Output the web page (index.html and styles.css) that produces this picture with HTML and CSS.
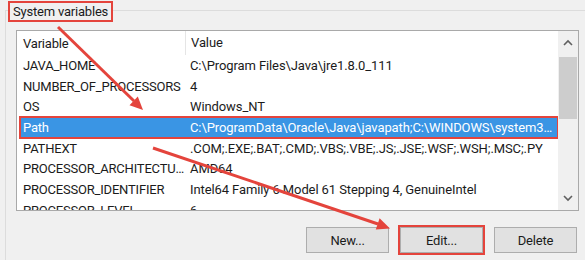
FILE: index.html
```html
<!DOCTYPE html>
<html lang="en">
<head>
<meta charset="UTF-8">
<title>System variables</title>
<link rel="stylesheet" href="styles.css">
</head>
<body>
  <div class="group">
    <div class="caption">System variables</div>

    <div class="list">
      <div class="rows">
        <div class="row head">
          <div class="cell name">Variable</div>
          <div class="cell value">Value</div>
        </div>
        <div class="row"><div class="cell name">JAVA_HOME</div><div class="cell value">C:\Program Files\Java\jre1.8.0_111</div></div>
        <div class="row"><div class="cell name">NUMBER_OF_PROCESSORS</div><div class="cell value">4</div></div>
        <div class="row"><div class="cell name">OS</div><div class="cell value">Windows_NT</div></div>
        <div class="row selected"><div class="cell name">Path</div><div class="cell value">C:\ProgramData\Oracle\Java\javapath;C:\WINDOWS\system32;C:\WINDOWS</div></div>
        <div class="row"><div class="cell name">PATHEXT</div><div class="cell value">.COM;.EXE;.BAT;.CMD;.VBS;.VBE;.JS;.JSE;.WSF;.WSH;.MSC;.PY</div></div>
        <div class="row"><div class="cell name">PROCESSOR_ARCHITECTURE</div><div class="cell value">AMD64</div></div>
        <div class="row"><div class="cell name">PROCESSOR_IDENTIFIER</div><div class="cell value">Intel64 Family 6 Model 61 Stepping 4, GenuineIntel</div></div>
        <div class="row"><div class="cell name">PROCESSOR_LEVEL</div><div class="cell value">6</div></div>
      </div>

      <div class="scrollbar">
        <svg class="chev" viewBox="0 0 20 16"><polyline points="6,10 10,6 14,10"/></svg>
        <div class="thumb"></div>
        <div class="track"></div>
        <svg class="chev" viewBox="0 0 20 16"><polyline points="6,6 10,10 14,6"/></svg>
      </div>
    </div>

    <div class="buttons">
      <button class="btn">New...</button>
      <button class="btn marked">Edit...</button>
      <button class="btn">Delete</button>
    </div>
  </div>

  <!-- red annotation arrows -->
  <svg class="arrows" viewBox="0 0 585 260">
    <line x1="58" y1="27" x2="134" y2="101"/>
    <polygon points="143,110 129.5,105.3 137.8,96.6"/>
    <line x1="153" y1="148" x2="378" y2="224"/>
    <polygon points="390,228.5 375.8,229.5 379.6,218.2"/>
  </svg>
</body>
</html>
```

FILE: styles.css
```css
body{margin:0;width:585px;height:260px;overflow:hidden;background:#f0f0f0;
     font-family:Roboto,"Noto Sans",sans-serif;font-size:13px;letter-spacing:-.2px;
     color:#1b1b1b;position:relative}

/* ─────────── GROUP BOX ─────────── */
.group{margin:10px 0 0 5px;height:250px;border-left:1px solid #dcdcdc;
       border-top:1px solid #dcdcdc;display:flex;flex-direction:column}
.caption{align-self:flex-start;margin:-10px 0 0 2px;padding:0 3px;height:17px;
         line-height:17px;background:#f0f0f0;border:2px solid #e4443c}

/* ─────────── LIST VIEW ─────────── */
.list{margin:8px 0 0 10px;width:561px;height:179px;border:1px solid #a9a9a9;
      background:#fff;display:flex}
.rows{flex:1;padding-left:3px;overflow:hidden}
.row{display:grid;grid-template-columns:165px 1fr;height:20.7px;align-items:center}
.row.head{height:24px}
.cell{white-space:nowrap;overflow:hidden;text-overflow:ellipsis}
.name{padding-left:3px}
.value{padding-left:5px;padding-right:4px;letter-spacing:-.1px}
.head .value{border-left:1px solid #e5e5e5;height:24px;line-height:24px}
.row.selected{background:#3a95e4;color:#fff;outline:2px solid #e4443c;outline-offset:-1px;
              position:relative}

/* ─────────── SCROLLBAR ─────────── */
.scrollbar{width:20px;background:#f0f0f0;display:flex;flex-direction:column}
.chev{width:20px;height:16px;margin-top:4px;flex:none}
.chev:last-child{margin:0 0 4px}
.chev polyline{fill:none;stroke:#606060;stroke-width:1.6}
.thumb{height:62px;margin:6px 1px 0;background:#cdcdcd}
.track{flex:1}

/* ─────────── BUTTONS ─────────── */
.buttons{display:flex;justify-content:flex-end;gap:11px;margin:16px 8px 0 0}
.btn{width:83px;height:26px;padding:0;border:1px solid #adadad;background:#e1e1e1;
     font:inherit;letter-spacing:inherit;color:#1b1b1b}
.btn.marked{outline:2px solid #e4443c;outline-offset:0}

/* ─────────── ANNOTATION ─────────── */
.arrows{position:absolute;top:0;left:0;width:585px;height:260px;pointer-events:none}
.arrows line{stroke:#e4443c;stroke-width:3}
.arrows polygon{fill:#e4443c}
```
